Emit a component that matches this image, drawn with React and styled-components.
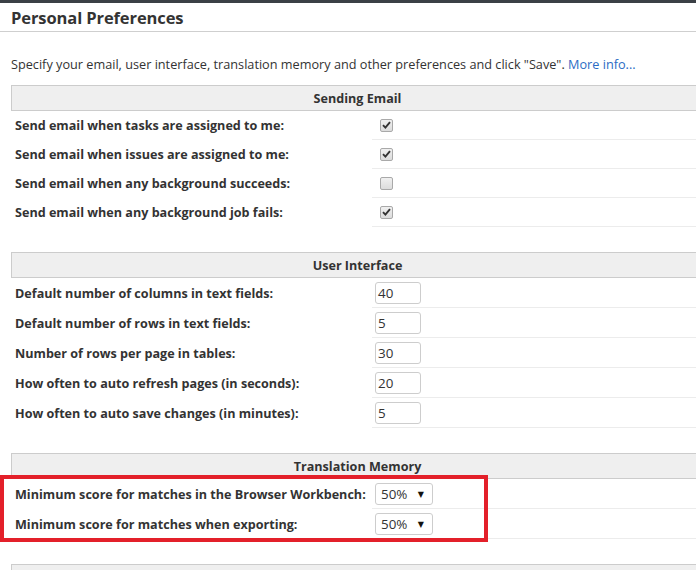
import React from "react";
import styled, { createGlobalStyle } from "styled-components";

const GlobalStyle = createGlobalStyle`
  html, body {
    margin: 0;
    padding: 0;
    background: #fff;
    overflow: hidden;
  }
  body {
    font-family: "Open Sans", "DejaVu Sans", sans-serif;
    color: #333;
  }
`;

const emailPrefs = [
  { label: "Send email when tasks are assigned to me:", checked: true },
  { label: "Send email when issues are assigned to me:", checked: true },
  { label: "Send email when any background succeeds:", checked: false },
  { label: "Send email when any background job fails:", checked: true },
];

const uiPrefs = [
  { label: "Default number of columns in text fields:", value: "40" },
  { label: "Default number of rows in text fields:", value: "5" },
  { label: "Number of rows per page in tables:", value: "30" },
  { label: "How often to auto refresh pages (in seconds):", value: "20" },
  { label: "How often to auto save changes (in minutes):", value: "5" },
];

const tmPrefs = [
  { label: "Minimum score for matches in the Browser Workbench:", value: "50%" },
  { label: "Minimum score for matches when exporting:", value: "50%" },
];

const CheckMark = () => (
  <svg width="9" height="8" viewBox="0 0 9 8">
    <path d="M1 4.2 L3.4 6.6 L8 1.2" fill="none" stroke="#333" strokeWidth="1.9" />
  </svg>
);

const App = () => {
  return (
    <>
      <GlobalStyle />
      <Page>
        <TopBar />
        <TitleBar>
          <Title>Personal Preferences</Title>
        </TitleBar>
        <Content>
          <Intro>
            Specify your email, user interface, translation memory and other preferences and click "Save".{" "}
            <Link>More info...</Link>
          </Intro>

          <Section>
            <SectionHeader>Sending Email</SectionHeader>
            {emailPrefs.map((p) => (
              <Row key={p.label} h={29}>
                <Label>{p.label}</Label>
                <Value pad={8}>
                  <Check>{p.checked ? <CheckMark /> : null}</Check>
                </Value>
              </Row>
            ))}
          </Section>

          <Section>
            <SectionHeader>User Interface</SectionHeader>
            {uiPrefs.map((p) => (
              <Row key={p.label} h={30}>
                <Label>{p.label}</Label>
                <Value pad={3}>
                  <TextBox>{p.value}</TextBox>
                </Value>
              </Row>
            ))}
          </Section>

          <Section>
            <SectionHeader>Translation Memory</SectionHeader>
            {tmPrefs.map((p) => (
              <Row key={p.label} h={30}>
                <Label>{p.label}</Label>
                <Value pad={3}>
                  <Select>
                    <span>{p.value}</span>
                    <Arrow>▼</Arrow>
                  </Select>
                </Value>
              </Row>
            ))}
            <Highlight />
          </Section>

          <Section>
            <SectionHeader />
          </Section>
        </Content>
      </Page>
    </>
  );
};

const Page = styled.div`
  width: 100%;
`;

const TopBar = styled.div`
  height: 3px;
  background: #3b4046;
`;

const TitleBar = styled.div`
  height: 28px;
  border-bottom: 1px solid #cfcfcf;
  padding-left: 11px;
  display: flex;
  align-items: center;
`;

const Title = styled.h1`
  margin: 0;
  font-size: 16.5px;
  font-weight: 700;
  color: #333;
  letter-spacing: -0.1px;
`;

const Content = styled.div`
  padding-left: 11px;
`;

const Intro = styled.p`
  margin: 22px 0 11px;
  font-size: 12.7px;
  line-height: 20px;
  color: #333;
  white-space: nowrap;
`;

const Link = styled.a`
  color: #2b6cc4;
  cursor: pointer;
`;

const Section = styled.div`
  position: relative;
  width: 692px;
  margin-bottom: 25px;
`;

const SectionHeader = styled.div`
  box-sizing: border-box;
  height: 26px;
  border: 1px solid #cccccc;
  border-right: none;
  background: #efefef;
  font-size: 12.6px;
  font-weight: 700;
  color: #333;
  display: flex;
  align-items: center;
  justify-content: center;
`;

const Row = styled.div`
  display: grid;
  grid-template-columns: 361px 1fr;
  height: ${(p) => p.h}px;
`;

const Label = styled.div`
  display: flex;
  align-items: center;
  padding-left: 4px;
  font-size: 12.6px;
  font-weight: 700;
  color: #333;
  white-space: nowrap;
`;

const Value = styled.div`
  display: flex;
  align-items: center;
  padding-left: ${(p) => p.pad}px;
  border-bottom: 1px solid #ececec;
`;

const Check = styled.span`
  width: 11px;
  height: 11px;
  border: 1px solid #a9a9a9;
  border-radius: 2px;
  background: linear-gradient(#f0f0f0, #dcdcdc);
  display: flex;
  align-items: center;
  justify-content: center;
`;

const TextBox = styled.div`
  box-sizing: border-box;
  width: 46px;
  height: 22px;
  border: 1px solid #cdcdcd;
  border-radius: 3px;
  padding-left: 2px;
  font-size: 13.4px;
  line-height: 20px;
  color: #333;
  background: #fff;
`;

const Select = styled.div`
  box-sizing: border-box;
  width: 58px;
  height: 22px;
  border: 1px solid #cdcdcd;
  border-radius: 3px;
  padding: 0 8px 0 5px;
  font-size: 13.4px;
  color: #333;
  display: flex;
  align-items: center;
  justify-content: space-between;
  background: #fff;
`;

const Arrow = styled.span`
  font-size: 8px;
  color: #111;
`;

const Highlight = styled.div`
  position: absolute;
  left: -11px;
  top: 22px;
  width: 488px;
  height: 67px;
  box-sizing: border-box;
  border: 4px solid #e3202a;
  pointer-events: none;
`;

export default App;
